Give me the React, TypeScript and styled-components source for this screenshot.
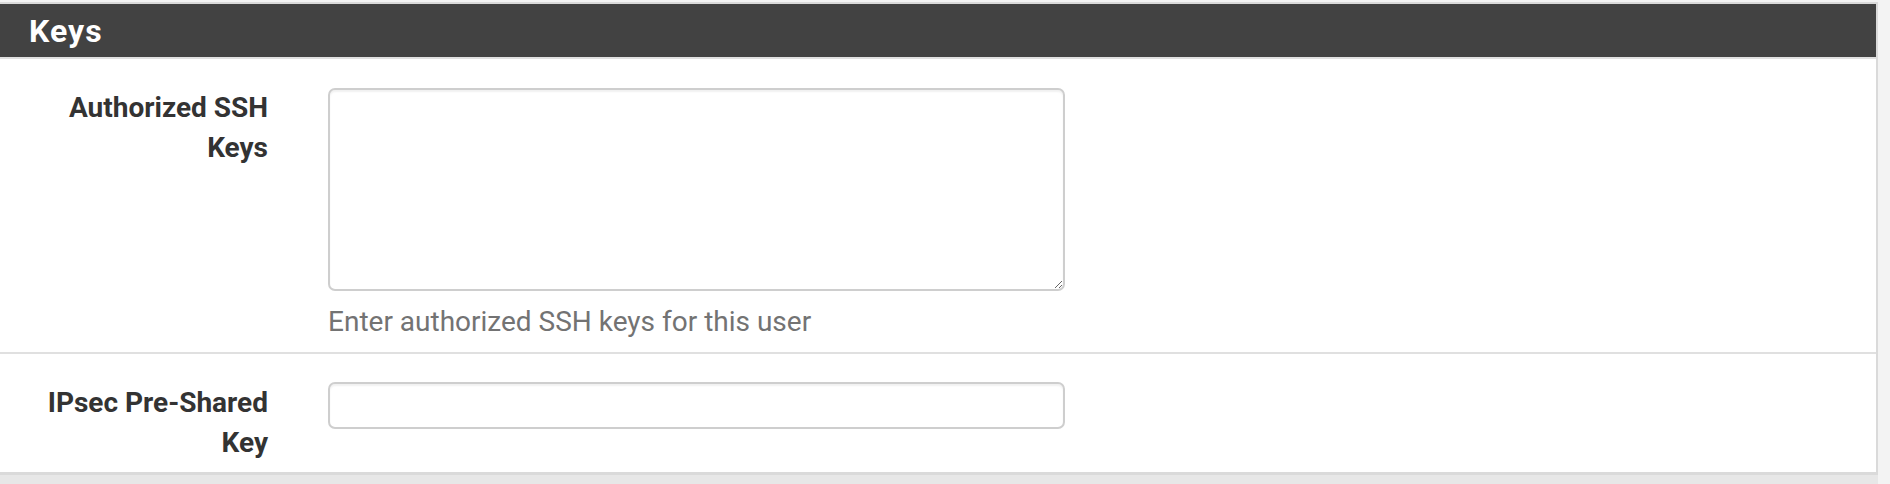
import styled, { createGlobalStyle } from "styled-components";

const GlobalStyle = createGlobalStyle`
  html, body {
    margin: 0;
    padding: 0;
    background: #f3f3f3;
    font-family: Roboto, "Liberation Sans", sans-serif;
    overflow: hidden;
  }
`;

const Page = styled.div`
  width: 1890px;
  height: 484px;
  padding-top: 2px;
  box-sizing: border-box;
  background: #f3f3f3;
  overflow: hidden;
`;

const Panel = styled.section`
  width: 1880px;
  margin-left: -2px;
  box-sizing: border-box;
  background: #fff;
  border: 2px solid #dadada;
  border-bottom-width: 3px;
  box-shadow: 0 12px 0 #e7e7e7;
`;

const PanelHeader = styled.header`
  display: flex;
  align-items: center;
  height: 55px;
  padding: 1px 0 0 29px;
  box-sizing: border-box;
  background: #424242;
  border-bottom: 2px solid #e0e0e0;
`;

const PanelTitle = styled.h2`
  margin: 0;
  color: #fff;
  font-size: 32px;
  font-weight: 700;
  letter-spacing: 1px;
`;

const FormRow = styled.div<{ $last?: boolean }>`
  display: grid;
  grid-template-columns: 328px 737px;
  padding: 29px 0 ${(p) => (p.$last ? "9px" : "10px")};
  border-bottom: ${(p) => (p.$last ? "none" : "2px solid #e0e0e0")};
`;

const Label = styled.label`
  padding: 0 60px 0 37px;
  text-align: right;
  color: #333;
  font-size: 28px;
  font-weight: 700;
  line-height: 40px;
`;

const Control = styled.div`
  display: flex;
  flex-direction: column;
`;

const fieldBase = `
  box-sizing: border-box;
  width: 737px;
  border: 2px solid #cecece;
  border-radius: 7px;
  box-shadow: inset 0 2px 2px rgba(0, 0, 0, 0.06);
  background: #fff;
  font-family: Roboto, "Liberation Sans", sans-serif;
  font-size: 28px;
  color: #555;
  outline: none;
`;

const TextArea = styled.textarea`
  ${fieldBase}
  height: 203px;
  resize: both;
  display: block;
`;

const TextInput = styled.input`
  ${fieldBase}
  height: 47px;
  margin-top: -1px;
  padding: 0 12px;
`;

const HelpText = styled.span`
  margin-top: 11px;
  color: #737373;
  font-size: 28px;
  line-height: 40px;
`;

export default function App() {
  return (
    <Page>
      <GlobalStyle />
      <Panel>
        <PanelHeader>
          <PanelTitle>Keys</PanelTitle>
        </PanelHeader>
        <FormRow>
          <Label htmlFor="authorizedkeys">Authorized SSH Keys</Label>
          <Control>
            <TextArea id="authorizedkeys" />
            <HelpText>Enter authorized SSH keys for this user</HelpText>
          </Control>
        </FormRow>
        <FormRow $last>
          <Label htmlFor="ipsecpsk">IPsec Pre-Shared Key</Label>
          <Control>
            <TextInput id="ipsecpsk" type="text" />
          </Control>
        </FormRow>
      </Panel>
    </Page>
  );
}
